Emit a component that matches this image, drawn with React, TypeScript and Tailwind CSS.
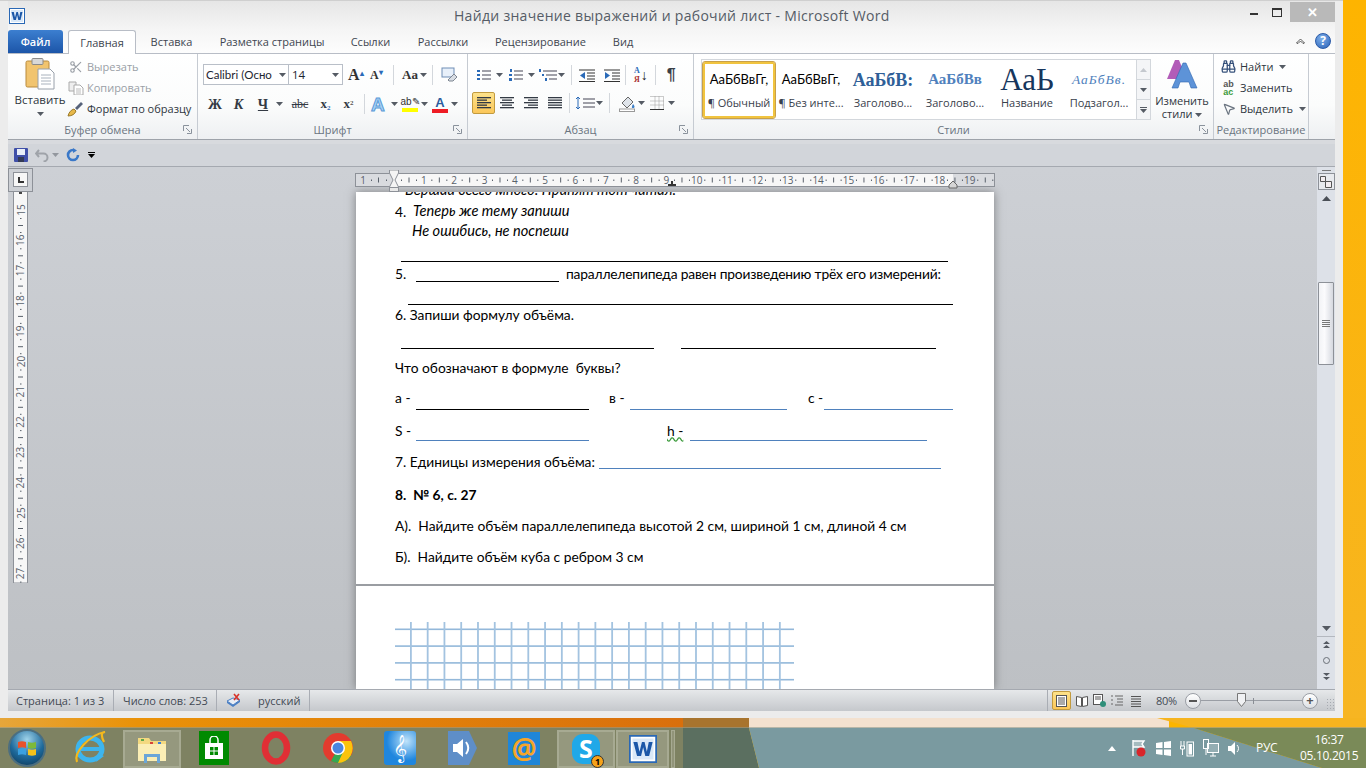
import { Binoculars, MousePointer2, Scissors } from "lucide-react";
import type { ReactNode } from "react";

const ui = "font-['Open_Sans',sans-serif]";
const serif = "font-['Liberation_Serif',serif]";

function Arrow({ className = "" }: { className?: string }) {
  return (
    <svg width="7" height="4" viewBox="0 0 7 4" className={"shrink-0 " + className}>
      <path d="M0 0h7L3.5 4z" fill="#555b64" />
    </svg>
  );
}

function Launcher() {
  return (
    <svg width="9" height="9" viewBox="0 0 9 9" className="absolute right-[5px] top-[4px]">
      <path d="M.5 6V.5H6" stroke="#8a929c" fill="none" />
      <path d="M3 3l4 4M8.5 4v4.5H4" stroke="#8a929c" fill="none" />
    </svg>
  );
}

function Group({ label, w, launcher = true, children }: { label: string; w: string; launcher?: boolean; children: ReactNode }) {
  return (
    <div className={"flex flex-col border-r border-[#c6cbd2] shrink-0 " + w}>
      <div className="h-[67px]">{children}</div>
      <div className="h-[16px] relative flex items-center justify-center text-[11px] text-[#6a7480] leading-none">
        {label}
        {launcher && <Launcher />}
      </div>
    </div>
  );
}

function Sep({ ml = "" }: { ml?: string }) {
  return <div className={"w-px h-[20px] bg-[#d3d7dc] shrink-0 " + ml} />;
}

function Lines({ kind }: { kind: "left" | "center" | "right" | "just" }) {
  const rows: [number, number][] = {
    left: [[0, 14], [0, 10], [0, 14], [0, 10], [0, 14]],
    center: [[0, 14], [2, 12], [0, 14], [2, 12], [0, 14]],
    right: [[0, 14], [4, 14], [0, 14], [4, 14], [0, 14]],
    just: [[0, 14], [0, 14], [0, 14], [0, 14], [0, 14]],
  }[kind] as [number, number][];
  return (
    <svg width="14" height="12" viewBox="0 0 14 12">
      {rows.map(([a, b], i) => (
        <rect key={i} x={a} y={i * 2.5} width={b - a} height="1.3" fill="#333a44" />
      ))}
    </svg>
  );
}

function PasteIcon() {
  return (
    <svg width="30" height="33" viewBox="0 0 30 33">
      <rect x="1" y="3" width="23" height="26" rx="1.5" fill="#f1c46f" stroke="#b98a3c" />
      <rect x="7" y="0.5" width="11" height="6" rx="1" fill="#d8d8d8" stroke="#8a8a8a" />
      <path d="M13 11h12l4 4v16H13z" fill="#fff" stroke="#98a0aa" />
      <path d="M16 17h10M16 20h10M16 23h10M16 26h10" stroke="#a9b2bd" />
    </svg>
  );
}

function CopyIcon() {
  return (
    <svg width="16" height="14" viewBox="0 0 16 14">
      <path d="M1 1h7v9H1z" fill="#eee" stroke="#aaa" />
      <path d="M6 4h6l3 3v7H6z" fill="#fff" stroke="#aaa" />
      <path d="M8 8h5M8 10h5M8 12h5" stroke="#bbb" />
    </svg>
  );
}

function BrushIcon() {
  return (
    <svg width="17" height="16" viewBox="0 0 17 16">
      <path d="M1 15c1-4 3-6 6-7l2 2c-1 3-4 5-8 5z" fill="#e8b94a" stroke="#9a7a2b" />
      <path d="M8 7l6-6 2 2-6 6z" fill="#56627a" />
    </svg>
  );
}

function WordGlyph({ size = 16 }: { size?: number }) {
  return (
    <svg width={size} height={size} viewBox="0 0 16 16">
      <rect x="0.5" y="0.5" width="15" height="15" fill="#fff" stroke="#2a68b5" />
      <rect x="2" y="2" width="12" height="12" fill="#d9e8f8" />
      <path d="M2.5 4h2.3l1.2 5.5L7.4 4h1.5l1.3 5.5L11.3 4h2.2l-2 8H9.3L8.1 7l-1.2 5H4.6z" fill="#1b57a8" />
    </svg>
  );
}

function SmallButton({ icon, label, muted, arrow }: { icon: ReactNode; label: string; muted?: boolean; arrow?: boolean }) {
  return (
    <div className={"h-[22px] flex items-center gap-[2px] text-[11px] leading-none -mt-px first:mt-0 pt-px " + (muted ? "text-[#9a9fa6]" : "text-[#2e3640]")}>
      <div className="w-[19px] flex justify-center shrink-0">{icon}</div>
      <span className="whitespace-nowrap">{label}</span>
      {arrow && <Arrow className="ml-[4px]" />}
    </div>
  );
}

function StyleItem({ preview, label, active, cls }: { preview: string; label: string; active?: boolean; cls: string }) {
  return (
    <div className={"w-[72px] h-[56px] shrink-0 flex flex-col items-center overflow-hidden " + (active ? "rounded-[2px] border-2 border-[#f1c43f] outline outline-[#c8a04a] bg-white" : "border-2 border-transparent")}>
      <div className={"h-[32px] w-full flex items-center justify-center overflow-hidden whitespace-nowrap leading-none " + cls}>{preview}</div>
      <div className="text-[11px] text-[#39414c] leading-none mt-px whitespace-nowrap">{label}</div>
    </div>
  );
}

function Ribbon() {
  return (
    <div className={"h-[86px] flex border-t border-[#b8bdc6] bg-[linear-gradient(#ffffff,#fbfcfc_60%,#eef0f2)] " + ui}>
      <Group label="Буфер обмена" w="w-[190px]">
        <div className="flex h-full">
          <div className="w-[58px] pl-[6px] flex flex-col items-center pt-[4px]">
            <PasteIcon />
            <div className="text-[11.5px] text-[#2e3640] mt-[3px] leading-none">Вставить</div>
            <Arrow className="mt-[6px]" />
          </div>
          <div className="pt-[1px]">
            <SmallButton muted icon={<Scissors size={14} className="text-[#9a9fa6]" />} label="Вырезать" />
            <SmallButton muted icon={<CopyIcon />} label="Копировать" />
            <SmallButton icon={<BrushIcon />} label="Формат по образцу" />
          </div>
        </div>
      </Group>

      <Group label="Шрифт" w="w-[270px]">
        <div className="pt-[10px] pl-[5px]">
          <div className="flex items-center h-[21px]">
            <div className="w-[86px] h-[21px] flex items-center justify-between border border-[#b9bfc8] bg-white px-[2px] text-[11.5px] text-[#1d2530] font-['Lato',sans-serif] whitespace-nowrap">
              Calibri (Осно
              <Arrow />
            </div>
            <div className="w-[54px] h-[21px] flex items-center justify-between border border-l-0 border-[#b9bfc8] bg-white px-[3px] text-[11.5px] text-[#1d2530]">
              14
              <Arrow />
            </div>
            <div className={"ml-[5px] w-[19px] text-[16px] font-bold text-[#333] leading-none " + serif}>A<sup className="text-[8px] text-[#2a6ab8]">▴</sup></div>
            <div className={"ml-[3px] w-[18px] text-[12px] font-bold text-[#333] leading-none " + serif}>A<sup className="text-[8px] text-[#2a6ab8]">▾</sup></div>
            <Sep ml="ml-[5px]" />
            <div className={"ml-[8px] text-[13px] font-bold text-[#333] leading-none " + serif}>Aa</div>
            <Arrow className="ml-[2px]" />
            <Sep ml="ml-[5px]" />
            <svg width="17" height="16" viewBox="0 0 17 16" className="ml-[8px]">
              <rect x="1" y="1" width="12" height="9" fill="#e8f0fa" stroke="#6f8db5" />
              <path d="M7 13l6-6 3 3-4 4H8z" fill="#d8dde4" stroke="#7f8792" />
            </svg>
          </div>
          <div className={"flex items-center h-[22px] mt-[8px] text-[#333a44] font-bold " + serif}>
            <div className="w-[24px] text-center text-[14px]">Ж</div>
            <div className="w-[23px] text-center text-[14px] italic">К</div>
            <div className="w-[26px] text-center text-[14px] underline">Ч</div>
            <Arrow />
            <div className="w-[30px] ml-[2px] text-center text-[12px] line-through font-normal">abc</div>
            <div className="w-[21px] text-center text-[13px]">x<sub className="text-[7px] text-[#2a6ab8]">2</sub></div>
            <div className="w-[25px] text-center text-[13px]">x<sup className="text-[7px] text-[#555]">2</sup></div>
            <Sep ml="ml-[3px]" />
            <div className="ml-[6px] w-[19px] text-[19px] text-[#a9d2f4] font-['Liberation_Sans',sans-serif] [-webkit-text-stroke:1px_#5a9ad8] leading-none">A</div>
            <Arrow className="ml-[1px]" />
            <div className="ml-[3px] w-[18px] flex flex-col items-center">
              <div className="text-[10px] font-normal text-[#333] leading-none font-['Liberation_Sans',sans-serif]">ab✎</div>
              <div className="w-[16px] h-[4px] bg-[#ffff00] mt-[1px]" />
            </div>
            <Arrow className="ml-[2px]" />
            <div className="ml-[3px] w-[18px] flex flex-col items-center">
              <div className="text-[13px] text-[#2b5c9e] leading-none font-['Liberation_Sans',sans-serif]">A</div>
              <div className="w-[16px] h-[4px] bg-[#ee1c25]" />
            </div>
            <Arrow className="ml-[2px]" />
          </div>
        </div>
      </Group>

      <Group label="Абзац" w="w-[226px]">
        <div className="pt-[11px] pl-[9px]">
          <div className="flex items-center h-[20px]">
            <svg width="14" height="14" viewBox="0 0 14 14"><path d="M5 3h9M5 7h9M5 11h9" stroke="#445" /><path d="M0 2h3v2H0zM0 6h3v2H0zM0 10h3v2H0z" fill="#2a6ab8" /></svg>
            <Arrow className="ml-[5px]" />
            <svg width="14" height="14" viewBox="0 0 14 14" className="ml-[6px]"><path d="M5 3h9M5 7h9M5 11h9" stroke="#445" /><path d="M1 1h2v3H1zM0 6h3v2H0zM0 10h3v3H0z" fill="#2a6ab8" /></svg>
            <Arrow className="ml-[5px]" />
            <svg width="18" height="14" viewBox="0 0 18 14" className="ml-[4px]"><path d="M4 3h14M7 7h11M10 11h8" stroke="#445" /><path d="M0 1h2v3H0zM3 6h2v2H3zM6 10h2v3H6z" fill="#2a6ab8" /></svg>
            <Arrow className="ml-[1px]" />
            <Sep ml="ml-[6px]" />
            <svg width="16" height="13" viewBox="0 0 16 13" className="ml-[7px]"><path d="M0 1h16M8 4h8M8 7h8M8 10h8M0 12.5h16" stroke="#333" /><path d="M6 3v7L1 6.5z" fill="#2a6ab8" /></svg>
            <svg width="16" height="13" viewBox="0 0 16 13" className="ml-[9px]"><path d="M0 1h16M8 4h8M8 7h8M8 10h8M0 12.5h16" stroke="#333" /><path d="M1 3v7l5-3.5z" fill="#2a6ab8" /></svg>
            <Sep ml="ml-[5px]" />
            <div className="ml-[8px] flex items-center">
              <div className={"flex flex-col items-center text-[8px] font-bold leading-[9px] " + serif}>
                <span className="text-[#2a6ab8]">А</span>
                <span className="text-[#a33]">Я</span>
              </div>
              <span className="text-[14px] text-[#222] leading-none ml-[1px]">↓</span>
            </div>
            <Sep ml="ml-[7px]" />
            <div className="ml-[11px] text-[16px] font-bold text-[#3a4048] leading-none font-['Liberation_Sans',sans-serif]">¶</div>
          </div>
          <div className="flex items-center h-[22px] mt-[7px] -ml-[5px]">
            <div className="w-[23px] h-[22px] flex items-center justify-center rounded-[2px] border border-[#c29b3f] bg-[linear-gradient(#fde28a,#fbc75a)]"><Lines kind="left" /></div>
            <div className="w-[24px] flex justify-center"><Lines kind="center" /></div>
            <div className="w-[24px] flex justify-center"><Lines kind="right" /></div>
            <div className="w-[23px] flex justify-center"><Lines kind="just" /></div>
            <Sep ml="ml-[3px]" />
            <svg width="20" height="15" viewBox="0 0 20 15" className="ml-[5px]"><path d="M3 1v12M1 3l2-2 2 2M1 11l2 2 2-2" stroke="#2a6ab8" fill="none" /><path d="M8 3h12M8 7h12M8 11h12" stroke="#445" /></svg>
            <Arrow className="ml-[1px]" />
            <Sep ml="ml-[6px]" />
            <svg width="17" height="17" viewBox="0 0 17 17" className="ml-[9px]"><path d="M3 8l6-6 5 5-6 6z" fill="#dfe4ea" stroke="#666" /><path d="M14 9c2 2 2 4 0 4s-1-2 0-4z" fill="#3d7fc7" /><rect x="0.5" y="14" width="15" height="2.5" fill="#fff" stroke="#999" /></svg>
            <Arrow className="ml-[2px]" />
            <svg width="14" height="14" viewBox="0 0 14 14" className="ml-[5px]"><path d="M.5.5h13v13H.5M.5 5h13M.5 9h13M5 .5v13M9 .5v13" stroke="#999" strokeDasharray="1 1" fill="none" /><path d="M0 13.5h14" stroke="#333" /></svg>
            <Arrow className="ml-[4px]" />
          </div>
        </div>
      </Group>

      <Group label="Стили" w="w-[520px]">
        <div className="flex h-full pl-[7px] pt-[5px]">
          <div className="w-[450px] h-[61px] flex border border-[#d3d7dc] bg-white items-center pl-[1px]">
            <StyleItem active preview="АаБбВвГг," label="¶ Обычный" cls="text-[13px] text-black font-['Lato',sans-serif]" />
            <StyleItem preview="АаБбВвГг," label="¶ Без инте..." cls="text-[13px] text-black font-['Lato',sans-serif]" />
            <StyleItem preview="АаБбВ:" label="Заголово..." cls={"text-[18px] font-bold text-[#2f5f98] " + serif} />
            <StyleItem preview="АаБбВв" label="Заголово..." cls={"text-[15px] font-bold text-[#4f81bd] " + serif} />
            <StyleItem preview="АаЬ" label="Название" cls={"text-[31px] text-[#17365d] " + serif} />
            <StyleItem preview="АаБбВв." label="Подзагол..." cls={"text-[13.5px] italic tracking-[1px] text-[#4f81bd] " + serif} />
            <div className="ml-[1px] w-[15px] h-full flex flex-col border-l border-[#d3d7dc] bg-[#f4f5f7] items-center">
              <div className="h-[20px] flex items-center border-b border-[#d3d7dc] w-full justify-center"><svg width="7" height="4"><path d="M0 4h7L3.5 0z" fill="#c4c8ce" /></svg></div>
              <div className="h-[20px] flex items-center border-b border-[#d3d7dc] w-full justify-center"><Arrow /></div>
              <div className="h-[19px] flex flex-col gap-[1px] items-center justify-center"><div className="w-[7px] h-px bg-[#555b64]" /><Arrow /></div>
            </div>
          </div>
          <div className="w-[63px] flex flex-col items-center">
            <svg width="32" height="32" viewBox="0 0 32 32">
              <path d="M1 20L9 1h4l6 15-3 4h-7l-2 0H1z" fill="#b25cb8" />
              <path d="M6 29L17 4h3l11 25h-6l-2-6h-9l-2 6z" fill="#5d93d8" stroke="#2f66b0" strokeWidth=".6" />
            </svg>
            <div className="text-[11px] text-[#2e3640] leading-[13px] text-center mt-[3px]">Изменить<br />стили <Arrow className="inline-block align-middle" /></div>
          </div>
        </div>
      </Group>

      <Group label="Редактирование" launcher={false} w="w-[95px]">
        <div className="pt-[1px] pl-[5px]">
          <SmallButton arrow icon={<Binoculars size={15} className="text-[#35507a]" />} label="Найти" />
          <SmallButton icon={<span className="text-[9px] leading-[8px] font-bold text-[#555] font-['Liberation_Sans',sans-serif]">ab<br /><span className="text-[#3a9a3a]">ac</span></span>} label="Заменить" />
          <SmallButton arrow icon={<MousePointer2 size={14} className="text-[#6a7480]" />} label="Выделить" />
        </div>
      </Group>
    </div>
  );
}

function TitleBar() {
  return (
    <div className={"h-[29px] flex items-center bg-[linear-gradient(#e6e6e6,#f5f5f5)] relative " + ui}>
      <div className="ml-[1px]"><WordGlyph size={16} /></div>
      <div className="ml-[429px] text-[14px] tracking-[.3px] text-[#555c66] whitespace-nowrap">Найди значение выражений и рабочий лист - Microsoft Word</div>
      <div className="absolute right-0 top-[1px] flex items-center">
        <div className="w-[8px] h-[2px] bg-[#333] mr-[14px] mt-[4px]" />
        <div className="w-[10px] h-[9px] border border-t-2 border-[#333] mr-[8px]" />
        <div className="w-[45px] h-[20px] bg-[#b9b9b9] flex items-center justify-center text-white text-[13px] font-bold leading-none">✕</div>
      </div>
    </div>
  );
}

function Tab({ w, children }: { w: string; children: ReactNode }) {
  return <div className={"h-[23px] flex items-center justify-center text-[#3e4650] " + w}>{children}</div>;
}

function Tabs() {
  return (
    <div className={"h-[23px] flex bg-[linear-gradient(#f5f5f5,#fdfdfd)] text-[11px] leading-none whitespace-nowrap relative " + ui}>
      <div className="w-[55px] h-[23px] flex items-center justify-center rounded-t-[3px] bg-[linear-gradient(#3c7fd0,#1c55a8)] text-white font-semibold">Файл</div>
      <div className="ml-[5px] w-[68px] h-[24px] flex items-center justify-center rounded-t-[3px] border border-b-0 border-[#b8bdc6] bg-white text-[#3e4650] z-10">Главная</div>
      <Tab w="w-[71px]">Вставка</Tab>
      <Tab w="w-[130px]">Разметка страницы</Tab>
      <Tab w="w-[67px]">Ссылки</Tab>
      <Tab w="w-[78px]">Рассылки</Tab>
      <Tab w="w-[117px]">Рецензирование</Tab>
      <Tab w="w-[48px]">Вид</Tab>
      <div className="flex-1" />
      <div className="flex items-center gap-[10px] pr-[4px] -mt-[1px]">
        <svg width="9" height="6" viewBox="0 0 9 6"><path d="M.5 5L4.500 1l4 4-1.500.500L4.500 3 2 5.500z" fill="#fff" stroke="#333" strokeWidth=".8" /></svg>
        <div className="w-[16px] h-[16px] rounded-full bg-[radial-gradient(circle_at_40%_30%,#7fb0ea,#2a62b8)] border border-[#2a5aa8] flex items-center justify-center text-white text-[12px] font-bold leading-none">?</div>
      </div>
    </div>
  );
}

function Qat() {
  return (
    <div className="h-[23px] flex items-center bg-[#d2d5da] border-b border-[#a5a9b0] pl-[6px]">
      <svg width="14" height="14" viewBox="0 0 14 14"><rect width="14" height="14" rx="1" fill="#3f4fa8" /><rect x="3" y="1" width="8" height="6" fill="#e8eef8" /><rect x="4" y="9" width="6" height="5" fill="#333a55" /></svg>
      <svg width="14" height="13" viewBox="0 0 14 13" className="ml-[7px]"><path d="M4 1L1 4.500l3 3.500M1.500 4.500h7a4 4 0 0 1 0 8" stroke="#9fa3a9" strokeWidth="2" fill="none" /></svg>
      <Arrow className="ml-[3px] opacity-50" />
      <svg width="14" height="14" viewBox="0 0 14 14" className="ml-[7px]"><path d="M7 2a5 5 0 1 0 5 5" stroke="#3a78c8" strokeWidth="2.600" fill="none" /><path d="M7 0v5l4-2.500z" fill="#3a78c8" /></svg>
      <div className="ml-[8px] flex flex-col items-center gap-[1px]"><div className="w-[7px] h-px bg-black" /><svg width="7" height="4"><path d="M0 0h7L3.500 4z" fill="#000" /></svg></div>
    </div>
  );
}

function HRuler() {
  const nums = Array.from({ length: 20 }, (_, i) => i);
  return (
    <svg width="640" height="22" viewBox="0 0 640 22" className="ml-[322px] mt-[3px] block">
      <rect x="0.500" y="3.500" width="639" height="13" fill="#d9dbdf" stroke="#8d9198" />
      <rect x="39" y="4" width="559" height="12" fill="#f7f7f7" />
      {nums.map((n) => (
        <g key={n} fill="#59616b" fontSize="10" fontFamily="Open Sans, sans-serif">
          {n > 0 && <text x={38.500 + n * 30.330} y="14" textAnchor="middle">{n}</text>}
          <rect x={46 + n * 30.330} y="9.500" width="1" height="1.500" />
          <rect x={53.500 + n * 30.330} y="7.500" width="1" height="5" />
          <rect x={61 + n * 30.330} y="9.500" width="1" height="1.500" />
        </g>
      ))}
      <rect x="16" y="9.500" width="1" height="1.500" fill="#59616b" />
      <rect x="23" y="7.500" width="1" height="5" fill="#59616b" />
      <rect x="31" y="9.500" width="1" height="1.500" fill="#59616b" />
      <text x="8" y="14" textAnchor="middle" fill="#59616b" fontSize="10" fontFamily="Open Sans, sans-serif">1</text>
      <path d="M34.500 0h9v3l-3.500 7 3.500 7v1h-9v-1l3.500-7-3.500-7z" fill="#f4f4f4" stroke="#8d9198" />
      <rect x="34.500" y="17.500" width="9" height="4" fill="#e8e8e8" stroke="#8d9198" />
      <path d="M316 11h2v3h3v2h-8v-2h3z" fill="#333" />
      <path d="M598 11l4 4v3h-8v-3z" fill="#d5d5d5" stroke="#666" />
    </svg>
  );
}

function VRuler() {
  const nums = [15, 16, 17, 18, 19, 20, 21, 22, 23, 24, 25, 26, 27];
  return (
    <svg width="15" height="391" viewBox="0 0 15 391" className="block ml-[5px]">
      <rect x="0.500" y="-1" width="14" height="392" fill="#f7f7f7" stroke="#8d9198" />
      <rect x="6" y="0" width="3" height="2" fill="#444" />
      {nums.map((n, i) => {
        const y = 18 + i * 30.300;
        return (
          <g key={n} fill="#59616b">
            <text x="7.500" y={y} fontSize="10" fontFamily="Open Sans, sans-serif" textAnchor="middle" transform={`rotate(-90 7.500 ${y})`} dominantBaseline="central">{n}</text>
            <rect x="7" y={y + 8} width="1.500" height="1" />
            <rect x="5" y={y + 15} width="5" height="1" />
            <rect x="7" y={y + 22} width="1.500" height="1" />
          </g>
        );
      })}
    </svg>
  );
}

function Blank({ w, color = "border-black", ml = "" }: { w: string; color?: string; ml?: string }) {
  return <span className={"inline-block h-[15px] border-b " + color + " " + w + " " + ml} />;
}

function Line({ h, children, className = "" }: { h: string; children?: ReactNode; className?: string }) {
  return <div className={"flex items-center whitespace-nowrap relative " + h + " " + className}>{children}</div>;
}

function Page() {
  const v = Array.from({ length: 23 }, (_, i) => 16 + i * 16.770);
  const hz = [7.500, 24.300, 41.100, 57.900];
  return (
    <div className="ml-[323px] w-[638px] h-[497px] bg-white shadow-[0_0_9px_rgba(60,60,60,.55)] text-[13.800px] text-black leading-none font-['Lato',sans-serif] pl-[39px] overflow-hidden">
      <div className="h-[10px] relative overflow-hidden">
        <div className="absolute left-[10px] -top-[5px] italic text-[14.600px] leading-[6px] whitespace-nowrap">Вершай всего много! Принят тот читал:</div>
      </div>
      <Line h="h-[19px]"><span className="w-[18px]">4.</span><span className="italic text-[14.600px]">Теперь же тему запиши</span></Line>
      <Line h="h-[20px]"><span className="ml-[17px] italic text-[14.600px]">Не ошибись, не поспеши</span></Line>
      <Line h="h-[21px]" className="pl-[6px] items-end"><span className="block w-[547px] h-px bg-black" /></Line>
      <Line h="h-[26px]" className="-mt-[1px]">
        <span className="w-[21px]">5.</span>
        <Blank w="w-[143px]" />
        <span className="ml-[7px] tracking-[-.18px]">параллелепипеда равен произведению трёх его измерений:</span>
      </Line>
      <Line h="h-[18px]" className="pl-[13px] items-end"><span className="block w-[545px] h-px bg-black" /></Line>
      <Line h="h-[20px]">6. Запиши формулу объёма.</Line>
      <Line h="h-[24px]" className="pl-[6px] items-end">
        <span className="block w-[253px] h-px bg-black" />
        <span className="block w-[255px] h-px bg-black ml-[27px]" />
      </Line>
      <Line h="h-[37px]">Что обозначают в формуле&nbsp; буквы?</Line>
      <Line h="h-[24px]">
        <span className="w-[21px]">а -</span><span className="self-end flex"><Blank w="w-[173px]" /></span>
        <span className="ml-[20px] w-[21px]">в -</span><span className="self-end flex"><Blank w="w-[157px]" color="border-[#4f81bd]" /></span>
        <span className="ml-[21px] w-[16px]">с -</span><span className="self-end flex"><Blank w="w-[129px]" color="border-[#4f81bd]" /></span>
      </Line>
      <Line h="h-[31px]" className="pt-[10px]">
        <span className="w-[21px]">S -</span><span className="self-end flex"><Blank w="w-[173px]" color="border-[#4f81bd]" /></span>
        <span className="ml-[78px] w-[23px] underline decoration-wavy decoration-[#3a9a3a]">h -</span><span className="self-end flex"><Blank w="w-[237px]" color="border-[#4f81bd]" /></span>
      </Line>
      <Line h="h-[28px]" className="pt-[14px]">
        <span className="w-[204px]">7. Единицы измерения объёма:</span><span className="self-end flex"><Blank w="w-[342px]" color="border-[#4f81bd]" /></span>
      </Line>
      <Line h="h-[41px]" className="pt-[11px] font-bold">8.&nbsp; № 6, с. 27</Line>
      <Line h="h-[32px]">А).&nbsp; Найдите объём параллелепипеда высотой 2 см, шириной 1 см, длиной 4 см</Line>
      <Line h="h-[30px]">Б).&nbsp; Найдите объём куба с ребром 3 см</Line>
      <div className="h-[12px]" />
      <div className="h-[2px] bg-[#9a9da2] -ml-[39px]" />
      <div className="h-[36px]" />
      <svg width="400" height="67" viewBox="0 0 400 67" className="block">
        {hz.map((y) => <rect key={y} x="0" y={y - 1} width="399" height="1.600" fill="#93b8da" />)}
        {v.map((x) => <rect key={x} x={x - 1} y="0" width="1.800" height="67" fill="#a3c3e0" />)}
      </svg>
    </div>
  );
}

function Scrollbar() {
  return (
    <div className="w-[18px] bg-[#dde1e8] flex flex-col items-center shrink-0 h-full">
      <div className="h-[1px] w-[9px] bg-[#777] mt-[3px]" />
      <div className="w-[17px] h-[17px] border border-[#8d9198] flex items-center justify-center mt-[2px] bg-[#e8eaee]">
        <svg width="12" height="12" viewBox="0 0 12 12"><path d="M.5 .5h5v5h-5zM5.500 5.500h6v6h-6z" fill="#f4eef0" stroke="#555" /></svg>
      </div>
      <svg width="9" height="5" className="mt-[6px]"><path d="M0 5h9L4.500 0z" fill="#4a4f57" /></svg>
      <div className="mt-[81px] w-[16px] h-[83px] rounded-[1px] border border-[#8d9198] bg-[linear-gradient(90deg,#f2f3f6,#fbfbfd_40%,#d6d9e0)] flex flex-col items-center justify-center gap-[1px]">
        {[0, 1, 2, 3].map((i) => <div key={i} className="w-[8px] h-px bg-[#777]" />)}
      </div>
      <svg width="9" height="5" className="mt-[261px]"><path d="M0 0h9L4.500 5z" fill="#555a62" /></svg>
      <div className="w-full h-px bg-[#b4b8bf] mt-[5px]" />
      <svg width="7" height="7" className="mt-[4px]"><path d="M0 3l3.500-3 3.500 3zM0 7l3.500-3 3.500 3z" fill="#555a62" /></svg>
      <div className="w-[7px] h-[7px] rounded-full border border-[#6b7078] mt-[9px]" />
      <svg width="7" height="7" className="mt-[9px]"><path d="M0 0l3.500 3 3.500-3zM0 4l3.500 3 3.500-3z" fill="#555a62" /></svg>
    </div>
  );
}

function DocArea() {
  return (
    <div className="h-[522px] flex overflow-hidden bg-[linear-gradient(#cdd0d5,#bdc0c4)]">
      <div className="w-[25px] shrink-0 flex flex-col">
        <div className="h-[24px] border border-[#8d9198] flex items-start justify-center mt-[1px]">
          <div className="w-[15px] h-[15px] mt-[3px] border border-[#8d9198] bg-[#f7f7f7] flex items-center justify-center">
            <div className="w-[6px] h-[6px] border-l-2 border-b-2 border-[#333]" />
          </div>
        </div>
        <VRuler />
      </div>
      <div className="flex-1 min-w-0 overflow-hidden">
        <HRuler />
        <Page />
      </div>
      <Scrollbar />
    </div>
  );
}

function StatusSep({ ml = "" }: { ml?: string }) {
  return <div className={"w-px h-[21px] bg-[#a9adb4] shrink-0 " + ml} />;
}

function StatusBar() {
  return (
    <div className={"h-[22px] flex items-center bg-[linear-gradient(#e6e8ea,#c5c8cc)] border-t border-[#a5a9b0] text-[11px] text-[#434a54] leading-none whitespace-nowrap " + ui}>
      <div className="w-[105px] pl-[8px]">Страница: 1 из 3</div>
      <StatusSep />
      <div className="w-[102px] pl-[9px]">Число слов: 253</div>
      <StatusSep />
      <div className="w-[92px] flex items-center pl-[9px]">
        <svg width="16" height="15" viewBox="0 0 16 15"><path d="M1 8l6 4 7-5v2l-7 5-6-4z" fill="#4a7fc4" /><path d="M1 8l6-3 7 2-7 5z" fill="#e8eef6" stroke="#4a7fc4" /><path d="M8 1l5 6M13 1L8 7" stroke="#d8332a" strokeWidth="1.600" /></svg>
        <span className="ml-[16px]">русский</span>
      </div>
      <StatusSep />
      <div className="flex-1" />
      <StatusSep />
      <div className="w-[19px] h-[19px] ml-[4px] flex items-center justify-center rounded-[2px] border border-[#c29b3f] bg-[linear-gradient(#fde28a,#fbc75a)]">
        <svg width="11" height="12" viewBox="0 0 11 12"><rect x=".5" y=".5" width="10" height="11" fill="#fff" stroke="#555" /><path d="M2 3h7M2 5h7M2 7h7M2 9h7" stroke="#555" /></svg>
      </div>
      <svg width="12" height="12" viewBox="0 0 12 12" className="ml-[5px]"><path d="M.5 1.500l5 1v9l-5-1zM11.500 1.500l-5 1v9l5-1z" fill="#fff" stroke="#555" /></svg>
      <svg width="13" height="13" viewBox="0 0 13 13" className="ml-[5px]"><rect x=".5" y=".5" width="9" height="10" fill="#fff" stroke="#555" /><path d="M2 3h6M2 5h6" stroke="#555" /><circle cx="10" cy="10" r="3" fill="#2f8f7a" /></svg>
      <svg width="12" height="12" viewBox="0 0 12 12" className="ml-[5px]"><path d="M4 1h8M6 4h6M6 7h6M4 10h8M0 1h2M0 5h2M0 9h2" stroke="#666" /></svg>
      <svg width="12" height="12" viewBox="0 0 12 12" className="ml-[7px]"><path d="M1 1.500h10M1 4h10M1 6.500h10M1 9h10M1 11.500h10" stroke="#555" /></svg>
      <span className="ml-[14px] w-[22px] tracking-[-.3px]">80%</span>
      <div className="ml-[7px] w-[16px] h-[16px] rounded-full border border-[#9a9ea5] bg-[linear-gradient(#fff,#dde0e4)] flex items-center justify-center"><div className="w-[8px] h-[2px] bg-[#555]" /></div>
      <div className="relative w-[101px] h-px bg-[#9a9ea5] flex justify-center items-center">
        <div className="w-px h-[6px] bg-[#8a8e95] ml-[3px]" />
        <svg width="9" height="14" viewBox="0 0 9 14" className="absolute left-[36px] -top-[7px]"><path d="M.5.500h8v8l-4 5-4-5z" fill="#f0f1f3" stroke="#777" /></svg>
      </div>
      <div className="w-[16px] h-[16px] rounded-full border border-[#9a9ea5] bg-[linear-gradient(#fff,#dde0e4)] flex items-center justify-center text-[13px] font-bold text-[#555]">+</div>
      <div className="ml-[8px] w-[9px] h-[12px] self-end mb-[1px] bg-[radial-gradient(#a6aab0_1px,transparent_1px)] bg-[length:3px_3px]" />
    </div>
  );
}

function TaskSlot({ children, active }: { children: ReactNode; active?: boolean }) {
  return (
    <div className={"flex items-center justify-center shrink-0 " + (active ? "border-[2px] border-[#a7aa92] bg-[rgba(255,255,255,.18)] mt-[1px] mx-[2px] w-[58px] h-[38px]" : "w-[62px] h-[40px]")}>
      {children}
    </div>
  );
}

function Taskbar() {
  return (
    <div className={"h-[40px] flex items-center " + ui}>
      <div className="w-[59px] pl-[6px] shrink-0">
        <div className="w-[38px] h-[38px] ml-[2px] rounded-full border-2 border-[#4c6e7f] bg-[radial-gradient(circle_at_50%_25%,#9fd3ea,#1e6a9c_55%,#0c3350)] flex items-center justify-center">
          <svg width="20" height="18" viewBox="0 0 20 18">
            <path d="M1 3c3-1 5-1 8 0v6C6 8 4 8 1 9z" fill="#e8522b" />
            <path d="M11 3c3 1 5 1 8 0v6c-3 1-5 1-8 0z" fill="#7db93a" />
            <path d="M1 10c3-1 5-1 8 0v6c-3-1-5-1-8 0z" fill="#3aa0e0" />
            <path d="M11 10c3 1 5 1 8 0v6c-3 1-5 1-8 0z" fill="#f5c21a" />
          </svg>
        </div>
      </div>
      <TaskSlot>
        <svg width="36" height="38" viewBox="0 0 36 38">
          <ellipse cx="18" cy="20" rx="12" ry="11" fill="none" stroke="#3db5ee" strokeWidth="5" />
          <path d="M8 20h20" stroke="#3db5ee" strokeWidth="4" />
          <path d="M27 25l5 2-8 6z" fill="#3db5ee" />
          <path d="M5 33C1 24 17 6 33 3c-5 0-3 6-1 10" stroke="#f3b81d" strokeWidth="2.200" fill="none" />
        </svg>
      </TaskSlot>
      <TaskSlot active>
        <svg width="30" height="30" viewBox="0 0 30 30">
          <path d="M1 4h11l2 3h15v20H1z" fill="#f3d980" />
          <path d="M1 10h28v17H1z" fill="#fbeeb5" />
          <path d="M7 20h16v9h-3v-6H10v6H7z" fill="#6ba6d8" />
          <rect x="4" y="5" width="3" height="2" fill="#5fa84a" /><rect x="13" y="8" width="3" height="2" fill="#d8453a" /><rect x="21" y="8" width="3" height="2" fill="#3a7ed8" />
        </svg>
      </TaskSlot>
      <TaskSlot>
        <div className="w-[30px] h-[34px] bg-[#008a00] flex items-center justify-center">
          <svg width="20" height="24" viewBox="0 0 20 24">
            <path d="M1 7h18v16H1z" fill="#fff" /><path d="M6 7V4a4 4 0 0 1 8 0v3" stroke="#fff" strokeWidth="1.500" fill="none" />
            <path d="M6 11h3.500v3.500H6zM10.500 11H14v3.500h-3.500zM6 15.500h3.500V19H6zM10.500 15.500H14V19h-3.500z" fill="#008a00" />
          </svg>
        </div>
      </TaskSlot>
      <TaskSlot>
        <svg width="30" height="34" viewBox="0 0 30 34">
          <ellipse cx="15" cy="17" rx="11" ry="13.500" fill="none" stroke="#e02f35" strokeWidth="6.500" />
        </svg>
      </TaskSlot>
      <TaskSlot>
        <svg width="30" height="30" viewBox="0 0 30 30">
          <circle cx="15" cy="15" r="15" fill="#e33b2e" />
          <path d="M15 15L28 23A15 15 0 0 1 8 28z" fill="#35a852" />
          <path d="M15 8h13A15 15 0 0 1 15 30l6-13z" fill="#fbc30c" />
          <circle cx="15" cy="15" r="7" fill="#fff" /><circle cx="15" cy="15" r="5.500" fill="#4a86e0" />
        </svg>
      </TaskSlot>
      <TaskSlot>
        <div className="w-[32px] h-[34px] rounded-[3px] bg-[radial-gradient(circle_at_70%_30%,#bfe3fa,#1f86de_60%)] flex items-center justify-center text-white text-[24px] leading-none font-['DejaVu_Sans',sans-serif]">𝄞</div>
      </TaskSlot>
      <TaskSlot>
        <svg width="32" height="34" viewBox="0 0 32 34">
          <path d="M2 0h21l8 17-8 17H2z" fill="#5e8ec8" />
          <path d="M7 13h4l6-5v18l-6-5H7z" fill="#fff" /><path d="M20 11c3 4 3 8 0 12" stroke="#fff" strokeWidth="2" fill="none" />
        </svg>
      </TaskSlot>
      <TaskSlot>
        <div className="w-[32px] h-[33px] bg-[#1f86d8] flex items-center justify-center text-[#f5a52a] text-[28px] font-bold leading-none">@</div>
      </TaskSlot>
      <TaskSlot active>
        <div className="relative w-[28px] h-[30px] rounded-[11px] bg-[#20a8e8] flex items-center justify-center text-white text-[25px] font-bold leading-none">
          S
          <div className="absolute -right-[4px] -bottom-[4px] w-[13px] h-[13px] rounded-full bg-[#f5a21a] border border-[#333] text-[9px] text-black flex items-center justify-center">1</div>
        </div>
      </TaskSlot>
      <div className="w-[53px] h-[38px] mt-[1px] -ml-[1px] border-[2px] border-[#a7aa92] bg-[rgba(255,255,255,.18)] flex items-center justify-center shrink-0">
        <WordGlyph size={28} />
      </div>
      <div className="w-[4px] h-[38px] mt-[1px] ml-[2px] border border-[#a7aa92] bg-[rgba(255,255,255,.15)]" />
      <div className="flex-1" />
      <div className="flex items-center text-white pr-[8px]">
        <svg width="8" height="5" className="mr-[16px]"><path d="M0 5h8L4 0z" fill="#fff" /></svg>
        <svg width="14" height="18" viewBox="0 0 14 18"><path d="M1 1v16M1 2h11l-2 3 2 3H1" stroke="#fff" strokeWidth="1.400" fill="#ffffff55" /><circle cx="9" cy="13" r="4.500" fill="#d8252a" /></svg>
        <svg width="15" height="15" viewBox="0 0 15 15" className="ml-[10px]"><path d="M0 2l6.500-1v6H0zM8 1l7-1v7H8zM0 8.500h6.500V14L0 13zM8 8.500h7V15l-7-1z" fill="#fff" /></svg>
        <svg width="14" height="18" viewBox="0 0 14 18" className="ml-[9px]"><path d="M1 2v5M4 2v5M.5 7h4v3h-4zM2.500 10v6" stroke="#fff" fill="none" /><rect x="7" y="3" width="6.500" height="14" fill="none" stroke="#fff" /><rect x="8.500" y="5" width="3.500" height="10.500" fill="#fff" /></svg>
        <svg width="16" height="18" viewBox="0 0 16 18" className="ml-[9px]"><rect x=".5" y=".5" width="5" height="9" fill="none" stroke="#fff" /><rect x="4.500" y="4.500" width="11" height="9" fill="#ffffff33" stroke="#fff" /><path d="M10 14v3M7 17h6M3 10v6" stroke="#fff" /></svg>
        <svg width="13" height="15" viewBox="0 0 13 15" className="ml-[9px]"><path d="M0 5h3l4-4v13l-4-4H0z" fill="#fff" /><path d="M9 4c2 2 2 5 0 7" stroke="#fff" fill="none" /></svg>
        <span className="ml-[15px] text-[12px] w-[24px] tracking-[-.3px]">РУС</span>
        <div className="ml-[20px] w-[58px] text-center text-[12px] leading-[16px] tracking-[-.3px]">16:37<br />05.10.2015</div>
      </div>
    </div>
  );
}

export default function App() {
  return (
    <div className="relative w-[1366px] h-[768px] overflow-hidden bg-[#fcb500]">
      <svg width="1366" height="768" viewBox="0 0 1366 768" className="absolute inset-0">
        <defs>
          <linearGradient id="strip" x1="0" x2="1" y1="0" y2="0">
            <stop offset="0" stopColor="#e6a63a" />
            <stop offset="0.200" stopColor="#ea9208" />
            <stop offset="1" stopColor="#d96f0c" />
          </linearGradient>
          <linearGradient id="side" x1="0" x2="0" y1="0" y2="1">
            <stop offset="0" stopColor="#feb400" />
            <stop offset="1" stopColor="#f7b522" />
          </linearGradient>
        </defs>
        <rect x="1340" y="0" width="26" height="720" fill="url(#side)" />
        <rect x="0" y="718" width="684" height="10" fill="url(#strip)" />
        <rect x="683" y="718" width="66" height="10" fill="#a8742e" />
        <rect x="749" y="718" width="420" height="10" fill="#f3e1cf" />
        <polygon points="1157,718 1366,718 1366,728 1194,728" fill="#f6b41f" />
        <rect x="0" y="728" width="684" height="40" fill="#7e8262" />
        <polygon points="683,728 749,728 759,768 683,768" fill="#5b6f60" />
        <polygon points="749,728 1194,728 1322,768 759,768" fill="#7a9aa0" />
        <polygon points="1194,728 1366,728 1366,768 1322,768" fill="#7a8a58" />
        <rect x="0" y="727" width="1366" height="1" fill="#8f9a8e" opacity=".6" />
      </svg>
      <div className="relative flex flex-col h-full">
        <div className="w-[1343px] h-[718px] bg-[#ececec] pl-[8px] pr-[8px] pb-[7px] flex flex-col border-t border-[#cfcfcf] shrink-0">
          <TitleBar />
          <Tabs />
          <Ribbon />
          <div className="h-[5px] bg-[#d8dade] border-t border-[#9ea3aa]" />
          <Qat />
          <DocArea />
          <StatusBar />
        </div>
        <div className="h-[10px] shrink-0" />
        <Taskbar />
      </div>
    </div>
  );
}
